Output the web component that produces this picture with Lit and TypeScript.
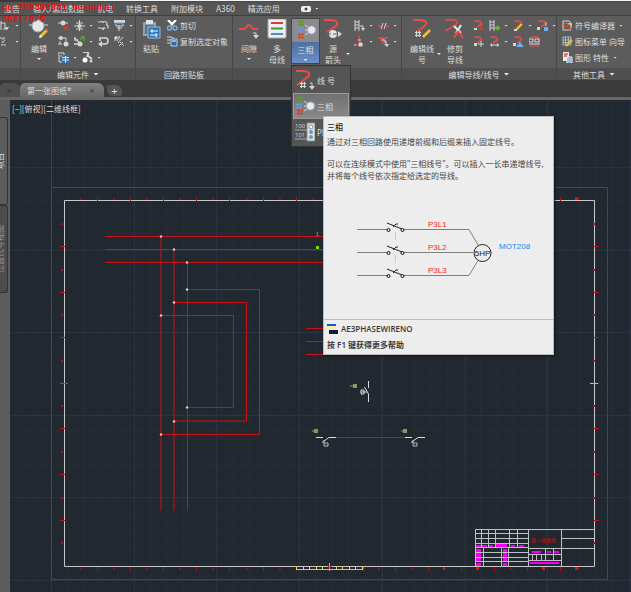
import { LitElement, html, svg, css, nothing } from "lit";
import { customElement } from "lit/decorators.js";

const R = "#f04a44";
const W = "#d4d6d8";
const B = "#6fb0ea";
const G = "#5aa428";
const Y = "#f2c12e";

const hook = (c = R) => svg`<path d="M1 1h4c3 0 4 2 3 3.500L4 7" fill="none" stroke=${c} stroke-width="1.500"/>`;

const small: Record<string, unknown> = {
  edgeA: svg`<path d="M1 1v9M1 3h4v6M3 9h4" fill="none" stroke=${W}/><path d="M5 7l2 3 2-3z" fill=${W}/>`,
  edgeB: svg`<path d="M0 2h6M3 2v7M1 9h6M5 4l-3 3" fill="none" stroke=${W} stroke-dasharray="2 1"/>`,
  nodeDelete: svg`<path d="M0 3h10" stroke=${W}/><circle cx="5" cy="3" r="2.500" fill=${W}/><path d="M6 6l4 4M10 6l-4 4" stroke="#d8401c" stroke-width="1.500"/>`,
  align: svg`<path d="M5.500 0v11M0 6h11M2 3h7M2 9h7" stroke=${W}/><circle cx="5.500" cy="6" r="2" fill=${W}/>`,
  gap: svg`<path d="M0 2h3l1-1 1 2 1-2 1 1h2v3M0 8h4l1 2 1-3 1 2M8 4l2 3M10 9V5" fill="none" stroke=${W}/>`,
  stack: svg`<path d="M0 0h11v3H0z" fill=${W}/><path d="M2 4v2h7V4M5 5v6M3 8h5" fill="none" stroke=${W}/><path d="M1 3h9" stroke=${B}/>`,
  copyNode: svg`<path d="M0 2h8v3M0 8h4" fill="none" stroke=${W}/><circle cx="3" cy="2" r="2" fill=${W}/><circle cx="8" cy="8" r="2.500" fill=${W}/><path d="M2 5v3" stroke=${W}/>`,
  toggle: svg`<path d="M0 2l5 4M0 8h5M1 1v3h3" fill="none" stroke=${W} stroke-width="1.300"/><circle cx="6" cy="8" r="2.500" fill=${W}/><path d="M6 4l3-3M7 1h3v4" stroke=${G} stroke-width="1.500" fill="none"/>`,
  turn: svg`<path d="M2 5V2h6q2 0 2 3t-3 3H3" fill="none" stroke=${W} stroke-width="1.500"/><path d="M0 8l4-3v6z" fill=${W}/>`,
  swap: svg`<path d="M1 1h5L3 5M1 1v4M9 1L4 7M6 6l4 4M9 6l-4 4" fill="none" stroke=${W}/><circle cx="2" cy="2" r="1.500" fill=${W}/>`,
  table: svg`<path d="M0 1h6v3H0zM1 5v5h3" fill="none" stroke=${W}/><path d="M4 3h7v8H4z" fill="#356ea6"/><path d="M4 5.500h7M4 8h7M7.500 4v7" stroke="#d5e8f8"/>`,
  fan: svg`<path d="M1 0h4c2 0 1 3 0 5M5 3l5 4" fill="none" stroke=${W} stroke-width="2"/><circle cx="3" cy="8" r="2.500" fill="#fff"/><circle cx="9" cy="9" r="1.500" fill=${W}/>`,
  cut: svg`<path d="M1 0l5 5M9 0L4 5" stroke="#fff" stroke-width="2.200"/><circle cx="2.500" cy="8" r="2" fill="none" stroke=${B} stroke-width="1.500"/><circle cx="8" cy="8" r="2" fill="none" stroke=${B} stroke-width="1.500"/>`,
  copy: svg`<path d="M0 1h5M0 4h4M0 7h3M6 1v2" stroke=${W}/><path d="M4 3h6v7H4z" fill="#2e6cab" stroke="#a9d0f2"/><path d="M5 5h4" stroke="#fff"/>`,
  ladder: svg`<path d="M1 0v11M5 0v11M1 2h4M1 5h4M1 8h4M6 6h3v3" stroke=${W} fill="none"/><path d="M7 8h4l-2 3z" fill=${W}/>`,
  breakWire: svg`<path d="M0 6h3M8 6h3" stroke=${R} stroke-width="1.500"/><path d="M3 9l2-6M6 9l2-6" stroke=${W}/>`,
  bend: svg`<path d="M5 0v5l3 4H0" fill="none" stroke=${R} stroke-width="1.500"/><path d="M4 4h3M0 9h2M5 7h3v3H5z" stroke=${W} fill=${W}/>`,
  tee: svg`<path d="M0 2h10M5 2v6" stroke=${R} stroke-width="1.500"/><path d="M3 4h4v3M8 5v3" stroke=${W} fill="none"/><path d="M6 8h5l-2 3z" fill=${W}/>`,
  wireDel: svg`${hook()}<path d="M1 8h3v2H1z" fill=${W}/><path d="M6 6l4 4M10 6l-4 4" stroke="#d8401c" stroke-width="1.500"/>`,
  rungAdd: svg`<path d="M1 0v11M5 0v11M1 2h4M1 5h4M1 8h4" stroke=${W}/><path d="M6 8h5M8.500 5.500v5" stroke="#5ac71d" stroke-width="1.800"/>`,
  wireEdit: svg`${hook()}<path d="M3 10l6-6" stroke=${Y} stroke-width="2"/><path d="M1 9h3v2H1z" fill=${W}/>`,
  wireDown: svg`${hook()}<path d="M0 7h3v3H0z" fill=${W}/><path d="M9 2v4" stroke=${W}/><path d="M7 7h4v4H7z" fill=${B}/>`,
  wireMove: svg`${hook()}<path d="M1 7h3v3H1z" fill=${W}/><path d="M8 5v6M5 8h6" stroke=${W}/>`,
  wireFlip: svg`${hook()}<path d="M2 9h8" stroke=${W}/><path d="M1 9l2-2v4zM10 9L8 7v4z" fill=${W}/>`,
  wireMark: svg`${hook()}<path d="M3 11l4-5 4 5z" fill=${B}/><path d="M0 7h3v3H0z" fill=${W}/>`,
  wireGrid: svg`<path d="M2 3q0-2 3-2h3q2 0 2 3v4" fill="none" stroke=${R} stroke-width="1.500"/><path d="M0 3h4v3H0zM6 3h4v3H6zM0 8h11" stroke=${W} fill="none"/><path d="M1 10h9" stroke=${R}/>`,
  compile: svg`<path d="M1 1h6l2 2v7H1z" fill="none" stroke=${W}/><circle cx="4" cy="5" r="2" fill="none" stroke=${R}/><path d="M5 3h5v4z" fill=${Y}/><path d="M6 8h4v2H6z" fill=${R}/>`,
  iconMenu: svg`<path d="M1 1h8v8H1zM1 4h8M1 6.500h8M3.500 1v8M6.500 1v8" fill="#46658a" stroke="#aeb6c0"/><path d="M4 10l6-6" stroke=${Y} stroke-width="2"/>`,
  props: svg`<path d="M1 0h6v9H1z" fill="#eee"/><path d="M2 2h4M2 4h3" stroke=${R} stroke-width="1.500"/><path d="M5 5h5v6H5z" fill="#3f78b4" stroke="#fff"/><path d="M6 7h3M6 9h3" stroke="#fff"/>`,
};

const hash = (x: number, y: number, c: string) =>
  svg`<path d="M${x + 1.5} ${y}v6M${x + 4.5} ${y}v6M${x} ${y + 1.5}h6M${x} ${y + 4.5}h6" stroke=${c} stroke-width="1.200"/>`;

const big: Record<string, unknown> = {
  edit: svg`<path d="M0 6h4M15 6h4" stroke=${W}/><circle cx="9" cy="7" r="6" fill="#e3e7ec" stroke="#a3abb5"/><path d="M11 18l7-7" stroke=${Y} stroke-width="3"/><path d="M10 19l1-3 2 2z" fill="#fff"/><path d="M17 10l2 2" stroke="#d8543a" stroke-width="2"/>`,
  paste: svg`<path d="M2 3h13v14H2z" fill="#93a1ac"/><path d="M5 1h7v4H5z" fill="#dbe3e8"/><path d="M4 6h9v9H4z" fill="#65737e"/><path d="M7 8h12v11H7z" fill="#2c72b4" stroke="#83c2f0"/><path d="M9 12h8M9 16h8M11 10v4M15 14v4" stroke="#fff"/>`,
  gap: svg`<path d="M0 10h5c3 0 2-4 5-4s2 4 5 4h4" fill="none" stroke=${R} stroke-width="1.800"/><path d="M14 14h3v3" fill="none" stroke=${W}/><path d="M14 16h6l-3 4z" fill=${W}/>`,
  bus: svg`<rect x="1" y="0" width="18" height="19" rx="1" fill="#eceff1" stroke="#aaa"/><path d="M4 4h12" stroke="#e0383d" stroke-width="2"/><path d="M4 9.500h12" stroke="#43962d" stroke-width="2"/><path d="M4 15h12" stroke="#498fd0" stroke-width="2"/>`,
  phase: svg`${hash(2, 0, "#5b9d25")}${hash(1, 7, "#5d9df0")}${hash(2, 13, "#dd432c")}<path d="M9 5l4 3M9 10h3M9 15l4-3" stroke=${W}/><circle cx="15.500" cy="10" r="4" fill="#e6ebf4" stroke="#a8b0c0"/>`,
  source: svg`<path d="M1 1h6c9 0 9 5 3 8l-6 4" fill="none" stroke=${R} stroke-width="2"/><circle cx="10" cy="15" r="4" fill="#dfe3e7"/><path d="M3 15h5M10 15h6" stroke="#666"/><path d="M15 12l4 3-4 3z" fill=${W}/>`,
  wireNo: svg`<path d="M1 1h6c9 0 9 4 3 8l-8 6" fill="none" stroke=${R} stroke-width="2"/>${hash(5, 12, W)}<path d="M15 13h2v3" fill="none" stroke=${W}/><path d="M14 16h6l-3 4z" fill=${W}/>`,
  wireEdit: svg`<path d="M1 1h6c9 0 9 4 3 8l-6 4" fill="none" stroke=${R} stroke-width="2"/>${hash(3, 12, W)}<path d="M11 18l7-7" stroke=${Y} stroke-width="2.500"/>`,
  trim: svg`<path d="M0 1h8c5 0 5 4 1 6l-9 5" fill="none" stroke=${R} stroke-width="1.500"/><path d="M16 6l-5 8M9 7l7 7" stroke="#e9edf0" stroke-width="2"/><path d="M13 12l-4 7M13 12l5 7" stroke=${R} stroke-width="2"/>`,
  plc: svg`<path d="M12 1h8v18h-8z" fill="#dce4ea" stroke="#80909c"/><circle cx="16" cy="5" r="2" fill="#fff" stroke="#888"/><circle cx="16" cy="10" r="2" fill="#6f96b8"/><circle cx="16" cy="15" r="2" fill="#6f96b8"/><path d="M0 8h12M0 17h12" stroke="#aaa"/><text x="0" y="6" font-size="6" fill="#ccc">100</text><text x="0" y="15" font-size="6" fill="#ccc">101</text>`,
};

type Tool = [icon: string, label: string, caret?: boolean];

const ic = (name: string) => html`<svg class="ic" viewBox="0 0 11 11" aria-hidden="true">${small[name]}</svg>`;
const bigIc = (name: string) => html`<svg class="big-ic" viewBox="0 0 20 20" aria-hidden="true">${big[name]}</svg>`;
const caret = html`<i class="caret"></i>`;

const tools = (rows: Tool[][]) => html`<div class="tools">
  ${rows.map((row) => html`<div class="row">${row.map(([i, l, c]) =>
    html`<button class="tool" aria-label=${l}>${ic(i)}${c ? caret : nothing}</button>`)}</div>`)}
</div>`;

const labelled = (rows: Tool[]) => html`<div class="tools">
  ${rows.map(([i, l, c]) => html`<button class="tool named">${ic(i)}<span>${l}</span>${c ? caret : nothing}</button>`)}
</div>`;

@customElement("cad-drawing")
class CadDrawing extends LitElement {
  static styles = css`
    :host { display: block; position: absolute; inset: 0; overflow: hidden; }
    svg { display: block; width: 100%; height: 100%; }
    .title { font: 5px "Noto Sans CJK SC", sans-serif; fill: #d01010; }
    .mark { font: 5px "Liberation Sans", sans-serif; fill: #6fe000; }
  `;

  render() {
    const steps = (n: number) => Array.from({ length: n }, (_, i) => i);
    const dots = [[161, 236], [174, 249], [187, 262], [187, 289], [174, 302], [161, 315], [187, 407], [174, 421], [161, 434]];
    const contact = (x: number) => svg`
      <path d="M${x} 437.500h7M${x + 13} 437.500h7M${x + 13} 437.500l-7 5" stroke="#d9dcdf" fill="none"/>
      <path d="M${x + 8} 440v3h4v3h-4v-3" stroke="#b9bcc0" fill="none"/>
      <path d="M${x - 4} 431h2M${x - 2} 431h4" stroke="#91935a" stroke-width="1"/>
      <path d="M${x - 2} 429h4v4h-4z" fill="#91935a"/>`;
    return html`<svg aria-label="图纸">
      <defs>
        <pattern id="minor" width="16.500" height="16.500" patternUnits="userSpaceOnUse" x="51" y="167">
          <path d="M0 .5h17M.5 0v17" stroke="#252c35" fill="none"/>
        </pattern>
      </defs>
      <g transform="translate(-10 -100)">
        <rect x="10" y="100" width="100%" height="100%" fill="url(#minor)"/>
        ${steps(40).map((i) => svg`<path d="M${Math.round(51 + i * 82.7) + 0.5} 100v3000" stroke="#2b3340"/>`)}
        ${steps(40).map((i) => svg`<path d="M10 ${Math.round(167 + i * 82.5) + 0.5}h4000" stroke="#2b3340"/>`)}
        <path d="M51.500 100v87" stroke="#1f5a2c"/>
        <path d="M51.500 187.500h556v392h-556z" fill="none" stroke="#bd141a"/>
        <path d="M64.500 200.500h530v366h-530z" fill="none" stroke="#c6c8ca"/>
        ${steps(15).map((i) => {
          const x = Math.round(97 + i * 33.1) + 0.5;
          return svg`<path d="M${x} 197v4M${x} 567v4" stroke="#b31217"/>`;
        })}
        ${steps(16).map((i) => {
          const x = Math.round(81 + i * 33.1);
          return svg`<path d="M${x - 1} 198h2v2h-2zM${x - 1} 568h2v2h-2z" fill="#8e1118"/>`;
        })}
        ${steps(7).map((i) => {
          const y = Math.round(246 + i * 45.6) + 0.5;
          return svg`<path d="M60 ${y}h5M594 ${y}h5" stroke="#c01217"/>`;
        })}
        ${steps(8).map((i) => {
          const y = Math.round(223 + i * 45.6);
          return svg`<path d="M61 ${y}h2v2h-2zM593 ${y}h2v2h-2z" fill="#b01217"/>`;
        })}
        <path d="M575 197h3v3h-3zM476 567h3v3h-3zM542 567h3v3h-3zM575 567h3v3h-3zM443 567h2v3h-2z" fill="#f00b0b"/>
        <path d="M60 383.500h8" stroke="#f02020"/>
        <path d="M590 383.500h8" stroke="#d0d02b"/>

        <path d="M105 236.500h230M105 249.500h230M105 262.500h230M161 236v275M174 250v261M187.500 263v248
          M187 289.500h72.500v145H161M174 302.500h72.500v118.500H174M161 315.500h72.500v92H187
          M306 328.500h30M306 341.500h30M306 354.500h30M336 437.500h69" fill="none" stroke="#cc1015"/>
        ${dots.map(([x, y]) => svg`<circle cx=${x} cy=${y + 0.5} r="1.200" fill="#e3c9c9"/>`)}
        <text class="mark" x="316" y="236">1</text>
        <path d="M316 246h3v3h-3z" fill="#6fe000"/>

        ${contact(316)}${contact(405)}
        <path d="M350 386h4" stroke="#91935a"/><path d="M353 384h4v4h-4z" fill="#91935a"/>
        <path d="M368.500 381v7M368.500 394v8M368.500 394l-4-7M361 390v4h3v-4h-3M361 392h6" fill="none" stroke="#d9dcdf"/>

        <path d="M296.500 567v2.500h66.500V567" fill="none" stroke="#d2d211"/>
        ${steps(11).map((i) => svg`<path d="M${296.5 + Math.round(i * 6.6)} 567v3" stroke="#e5e516"/>`)}
        <path d="M329.500 563v8" stroke="#e5a516"/>
        <path d="M328 566.500h4" stroke="#f33"/>

        <path d="M476 545h5v3h-5zM482 545h5v3h-5zM489 545h4v3h-4zM495 544h12v4h-12zM511 545h4v3h-4zM519 545h5v3h-5z
          M476 549h5v3h-5zM476 553h5v4h-5zM476 558h5v3h-5zM476 563h5v3h-5zM503 549h4v3h-4zM503 553h4v4h-4zM503 558h4v3h-4zM503 563h4v3h-4z
          M532 551h9v2h-9zM547 551h4v2h-4zM554 551h5v2h-5zM530 562h29v2h-29z" fill="#f400f4"/>
        <path d="M475.500 566v-36.500h119M475 533.500h53M475 538.500h53M475 543.500h53M475 547.500h53M475 552.500h53M475 557.500h53M475 561.500h53
          M481.500 530v18M488.500 530v18M495.500 530v18M509.500 530v18M517.500 530v18M528.500 530v36M561.500 530v36
          M483.500 548v18M501.500 548v18M508.500 548v18M528 548.500h66M561 538.500h33M528 554.500h33M528 560.500h33
          M545.500 548v12M553.500 548v12M532.500 555v5M536.500 555v5M541.500 555v5" fill="none" stroke="#bfc2c5"/>
        <text class="title" x="531" y="542">第一张图纸</text>
      </g>
    </svg>`;
  }
}

@customElement("app-root")
class AppRoot extends LitElement {
  static styles = css`
    :host {
      display: flex; flex-direction: column; position: relative; min-height: 100vh; overflow: hidden;
      background: #3a3a3a; color: #dedede;
      font: 8px/11px "Noto Sans", "Noto Sans CJK SC", sans-serif;
    }
    * { box-sizing: border-box; }
    button { font: inherit; color: inherit; background: none; border: 0; padding: 0; margin: 0; white-space: nowrap; }
    .top { height: 2px; border-top: 1px solid #f4f4f4; background: #4a4a4a; margin-left: 60px; }
    .menu { display: flex; align-items: center; gap: 13px; height: 13px; padding-left: 4px; background: #555; }
    .rec { display: flex; align-items: center; margin-left: 8px; }
    .rec svg { width: 10px; height: 6px; }
    .ribbon { display: grid; grid-template-columns: 21fr 115fr 97fr 169fr 155fr 74fr; height: 65px; background: #5c5c5c; border-top: 1px solid #3e3e3e; }
    .panel { display: flex; flex-direction: column; min-width: 0; border-right: 1px solid #484848; }
    .panel:last-child { border-right: 0; }
    .body { display: flex; flex: 1; }
    .strip { display: flex; align-items: center; justify-content: center; height: 12px; background: #4f4f4f; }
    .caret { display: block; flex: none; width: 4px; height: 2px; margin-left: 4px; background: #e8e8e8; clip-path: polygon(0 0, 100% 0, 50% 100%); }
    .strip .caret { width: 6px; height: 3px; }
    .ic { display: block; flex: none; width: 11px; height: 11px; }
    .big-ic { display: block; flex: none; width: 20px; height: 20px; }
    .tools { display: flex; flex-direction: column; align-items: flex-start; gap: 5px; padding-top: 4px; }
    .row { display: flex; gap: 5px; }
    .tool { display: flex; align-items: center; height: 11px; }
    .named span { margin-left: 2px; }
    .big { display: flex; flex-direction: column; align-items: center; justify-content: flex-start; padding-top: 3px; gap: 4px; }
    .big .caret { margin: 0; }
    .side { flex-direction: row; align-items: flex-start; gap: 3px; }
    .side > span { display: flex; flex-direction: column; align-items: center; gap: 4px; }
    .side > .caret { margin-top: 34px; }
    .w28 { width: 28px; }
    .first { overflow: hidden; }
    .edit .body { padding-left: 4px; gap: 5px; }
    .clip .body { padding-left: 1px; gap: 2px; }
    .insert .body { padding-left: 2px; }
    .insert .side { margin-left: 3px; }
    .wires .body { padding-left: 8px; }
    .misc .body { padding-left: 5px; }
    .wires .tools, .insert .tools { margin-left: 4px; }
    .split { position: relative; width: 29px; margin-top: 2px; }
    .split .face { width: 29px; height: 46px; padding-top: 1px; border: 1px solid #444; background: linear-gradient(#8b8b8b 0 23px, #4e6f9f 23px, #6b90c6); }
    .drop { position: absolute; z-index: 2; top: 47px; left: 0; width: 60px; padding: 1px; border: 1px solid #333; background: #555; }
    .item { display: flex; align-items: center; gap: 2px; width: 100%; height: 26px; padding-left: 2px; overflow: hidden; }
    .item.on { background: linear-gradient(#707070, #8a8a8a); outline: 1px solid #9a9a9a; outline-offset: -1px; }
    .tip { position: absolute; z-index: 3; top: 50px; left: 31px; width: 231px; border: 1px solid #bdbdbd; background: #ededed; color: #444; line-height: 12px; box-shadow: 1px 1px 2px #111; }
    .tip h2, .tip p { margin: 0; padding: 0 3px; font-size: 8px; font-weight: 400; white-space: nowrap; }
    .tip h2 { padding-top: 4px; font-weight: 500; color: #222; }
    .tip .lead { margin: 3px 0 10px; }
    .tip svg { display: block; width: 100%; }
    .tip text { font: 8px "Liberation Sans Narrow", "Liberation Sans", sans-serif; }
    .tip footer { border-top: 1px solid #bcbcbc; padding: 3px; font-weight: 600; color: #383838; }
    .tip .cmd { display: flex; align-items: center; gap: 3px; margin-bottom: 4px; font-family: "Open Sans", sans-serif; }
    .tip .cmd svg { width: 11px; height: 10px; }
    .tabs { display: flex; align-items: flex-end; height: 20px; padding-top: 3px; border-bottom: 3px solid #666; }
    .doc { display: flex; align-items: center; justify-content: space-between; width: 84px; height: 14px; padding: 0 9px 0 7px; border-radius: 5px 6px 0 0; background: linear-gradient(#808080, #686868); }
    .doc.old { width: 20px; padding: 0 6px; background: #505050; }
    .x { width: 6px; color: #3a3a3a; font-size: 9px; }
    .add { width: 15px; height: 11px; margin: 0 0 1px 3px; border-radius: 2px 6px 2px 6px; background: #555; font-size: 11px; }
    .work { display: flex; flex: 1; min-height: 480px; }
    aside { flex: none; width: 10px; padding-top: 17px; background: #5d5d5d; }
    .pal { display: flex; align-items: center; justify-content: center; width: 8px; height: 88px; overflow: hidden; border: 1px solid #333; border-left: 0; border-radius: 0 3px 3px 0; background: #5c5c5c; }
    .pal.off { background: #4c4c4c; color: #999; }
    .pal span { flex: none; writing-mode: vertical-rl; text-orientation: sideways; line-height: 8px; rotate: 180deg; margin-right: 7px; }
    main { position: relative; flex: 1; background: #212830; }
    .view { position: relative; z-index: 1; margin: 3px 2px; font-family: "Noto Sans CJK SC", sans-serif; font-size: 8px; }
    .stamp { position: absolute; z-index: 4; top: 2px; left: 2px; margin: 0; color: #f00c0c; font: bold 9px/12px "Liberation Mono", monospace; pointer-events: none; white-space: pre; }
  `;

  private diagram() {
    const rows = [230, 253, 276];
    return html`<svg viewBox="324 182 229 137" aria-label="三相线号示意图">
      <path d="M395.500 232v8M395.500 255v8" stroke="#ccc"/>
      ${rows.map((y, i) => svg`
        <path d="M357 ${y - 0.5}h30M404 ${y - 0.5}h${i === 1 ? 69 : 65}" stroke="#808080"/>
        <path d="M387 ${y - 7}l15 6M393 ${y - 3}l3-3h2" fill="none" stroke="#222"/>
        <circle cx="388.500" cy=${y} r="1.500" fill="#ededed" stroke="#111"/>
        <circle cx="402.500" cy=${y} r="1.500" fill="#ededed" stroke="#111"/>
        <text x="428" y=${y - 3} fill="#f22">P3L${i + 1}</text>`)}
      <path d="M469 229.500l9 15.500M469 275.500l9-15" stroke="#808080"/>
      <circle cx="482.500" cy="253" r="8.500" fill="none" stroke="#222"/>
      <text x="482.500" y="256" text-anchor="middle" fill="#222">5HP</text>
      <text x="499" y="249" fill="#1d86ea">MOT208</text>
    </svg>`;
  }

  render() {
    return html`
      <div class="top"></div>
      <nav class="menu">
        ${["报告", "输入/输出数据", "机电", "转换工具", "附加模块", "A360", "精选应用"].map((t) => html`<button>${t}</button>`)}
        <button class="rec" aria-label="录制"><svg viewBox="0 0 10 6"><rect width="10" height="6" rx="2" fill="#eee"/><circle cx="5" cy="3" r="1.500" fill="#444"/></svg>${caret}</button>
      </nav>
      <div class="ribbon">
        <section class="panel first">
          <div class="body">${tools([[["edgeA", "插入", true]], [["edgeB", "连接", true]]])}</div>
          <div class="strip"></div>
        </section>
        <section class="panel edit">
          <div class="body">
            <button class="big w28">${bigIc("edit")}<span>编辑</span>${caret}</button>
            ${tools([
              [["nodeDelete", "删除元件"], ["align", "对齐", true], ["gap", "快速移动"], ["stack", "属性", true]],
              [["copyNode", "复制元件"], ["toggle", "切换常开/常闭", true], ["turn", "反转"], ["swap", "交换", true]],
              [["table", "目录", true], ["fan", "重排", true]],
            ])}
          </div>
          <div class="strip">编辑元件${caret}</div>
        </section>
        <section class="panel clip">
          <div class="body">
            <button class="big w28">${bigIc("paste")}<span>粘贴</span></button>
            ${labelled([["cut", "剪切"], ["copy", "复制选定对象"]])}
          </div>
          <div class="strip">回路剪贴板</div>
        </section>
        <section class="panel insert">
          <div class="body">
            <button class="big w28">${bigIc("gap")}<span>间隙</span>${caret}</button>
            <button class="big w28">${bigIc("bus")}<span>多<br />母线</span></button>
            <div class="split">
              <button class="big face">${bigIc("phase")}<span>三相</span>${caret}</button>
              <div class="drop">
                <button class="item">${bigIc("wireNo")}线 号</button>
                <button class="item on">${bigIc("phase")}三相</button>
                <button class="item">${bigIc("plc")}PLC I/O</button>
                <article class="tip">
                  <h2>三相</h2>
                  <p class="lead">通过对三相回路使用递增前缀和后缀来插入固定线号。</p>
                  <p>可以在连续模式中使用"三相线号"。可以插入一长串递增线号,<br />并将每个线号依次指定给选定的导线。</p>
                  ${this.diagram()}
                  <footer>
                    <div class="cmd"><svg viewBox="0 0 11 10"><path d="M0 0h9v8H0z" fill="#f3efb0"/><path d="M0 0h9v2H0z" fill="#2b49cc"/><path d="M2 6h9v4H2z" fill="#161a3a"/></svg>AE3PHASEWIRENO</div>
                    <div>按 F1 键获得更多帮助</div>
                  </footer>
                </article>
              </div>
            </div>
            <button class="big side"><span>${bigIc("source")}<span>源<br />箭头</span></span>${caret}</button>
            ${tools([
              [["ladder", "阶梯", true], ["breakWire", "断开", true]],
              [["bend", "角", true], ["tee", "T 形标记", true]],
            ])}
          </div>
          <div class="strip"></div>
        </section>
        <section class="panel wires">
          <div class="body">
            <button class="big side"><span>${bigIc("wireEdit")}<span>编辑线<br />号</span></span>${caret}</button>
            <button class="big w28">${bigIc("trim")}<span>修剪<br />导线</span></button>
            ${tools([
              [["wireDel", "删除线号"], ["rungAdd", "添加横档", true], ["wireEdit", "编辑导线", true], ["wireDown", "导线类型", true]],
              [["wireMove", "移动线号"], ["wireFlip", "翻转", true], ["wireMark", "标记"], ["wireGrid", "检查"]],
            ])}
          </div>
          <div class="strip">编辑导线/线号${caret}</div>
        </section>
        <section class="panel misc">
          <div class="body">${labelled([["compile", "符号编译器", true], ["iconMenu", "图标菜单 向导"], ["props", "图形 特性", true]])}</div>
          <div class="strip">其他工具${caret}</div>
        </section>
      </div>
      <div class="tabs">
        <div class="doc old"><button class="x" aria-label="关闭">×</button></div>
        <div class="doc"><span>第一张图纸*</span><button class="x" aria-label="关闭">×</button></div>
        <button class="add" aria-label="新图形">+</button>
      </div>
      <div class="work">
        <aside>
          <button class="pal"><span>项目</span></button>
          <button class="pal off"><span>位置代号视图</span></button>
        </aside>
        <main>
          <cad-drawing></cad-drawing>
          <div class="view">[−][俯视][二维线框]</div>
        </main>
      </div>
      <p class="stamp">qq 799302581 huanghai
2021/9/5</p>`;
  }
}
